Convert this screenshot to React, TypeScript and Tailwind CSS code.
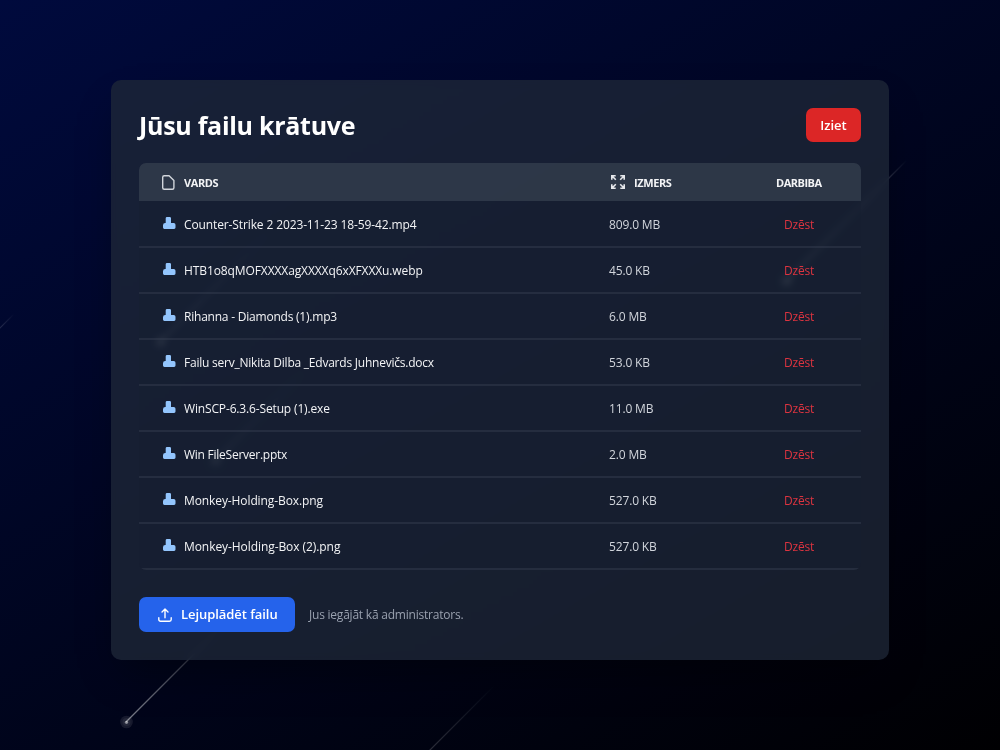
import React from "react";

type FileRow = { name: string; size: string; tracking: string };

const files: FileRow[] = [
  { name: "Counter-Strike 2 2023-11-23 18-59-42.mp4", size: "809.0 MB", tracking: "tracking-[-0.12px]" },
  { name: "HTB1o8qMOFXXXXagXXXXq6xXFXXXu.webp", size: "45.0 KB", tracking: "tracking-[-0.1px]" },
  { name: "Rihanna - Diamonds (1).mp3", size: "6.0 MB", tracking: "tracking-[-0.22px]" },
  { name: "Failu serv_Nikita Dilba _Edvards Juhnevičs.docx", size: "53.0 KB", tracking: "tracking-[-0.23px]" },
  { name: "WinSCP-6.3.6-Setup (1).exe", size: "11.0 MB", tracking: "tracking-[-0.15px]" },
  { name: "Win FileServer.pptx", size: "2.0 MB", tracking: "tracking-[-0.25px]" },
  { name: "Monkey-Holding-Box.png", size: "527.0 KB", tracking: "tracking-[-0.1px]" },
  { name: "Monkey-Holding-Box (2).png", size: "527.0 KB", tracking: "tracking-[-0.07px]" },
];

const trails = [
  { x: 126, y: 722, len: 112, o: 0.48, dot: true },
  { x: 425, y: 755, len: 70, o: 0.18, dot: false },
  { x: -10, y: 338, len: 24, o: 0.25, dot: false },
  { x: 786, y: 281, len: 121, o: 1, dot: true },
  { x: 160, y: 342, len: 110, o: 0.9, dot: true },
  { x: 215, y: 461, len: 90, o: 0.7, dot: true },
];

function Meteors() {
  return (
    <svg className="absolute inset-0" width="1000" height="750" viewBox="0 0 1000 750" aria-hidden="true">
      <defs>
        {trails.map((t, i) => (
          <linearGradient key={i} id={`trail${i}`} gradientUnits="userSpaceOnUse" x1={t.x} y1={t.y} x2={t.x + t.len} y2={t.y - t.len}>
            <stop offset="0" stopColor="#fff" stopOpacity={t.o} />
            <stop offset="1" stopColor="#fff" stopOpacity="0" />
          </linearGradient>
        ))}
      </defs>
      {trails.map((t, i) => (
        <g key={i}>
          <path d={`M${t.x} ${t.y}l${t.len} ${-t.len}`} stroke={`url(#trail${i})`} strokeWidth="1.2" />
          {t.dot && <circle cx={t.x + 0.5} cy={t.y} r="6.3" fill="#fff" fillOpacity={t.o * 0.18} />}
          {t.dot && <circle cx={t.x + 0.5} cy={t.y} r="4" fill="#fff" fillOpacity={t.o * 0.12} />}
          {t.dot && <circle cx={t.x + 0.5} cy={t.y + 0.3} r="1.6" fill="#fff" fillOpacity={t.o} />}
        </g>
      ))}
    </svg>
  );
}

function FileIcon() {
  return (
    <svg className="ml-[21px] h-[17px] w-[17px]" viewBox="0 0 17 17" fill="none" stroke="#d1d5db" strokeWidth="1.4" strokeLinejoin="round">
      <path d="M4.2 1.7h4.9L13.9 6.5v7.2a1.5 1.5 0 0 1-1.5 1.5H4.2a1.5 1.5 0 0 1-1.5-1.5V3.2a1.5 1.5 0 0 1 1.5-1.5z" />
    </svg>
  );
}

function ExpandIcon() {
  return (
    <svg className="h-[14px] w-[14px]" viewBox="0 0 14 14" fill="none" stroke="#e5e7eb" strokeWidth="1.6">
      <path d="M.8 4.7V.8h3.900M.8.8l4 4M9.300.8h3.900v3.900M13.200.8l-4 4M.8 9.300v3.900h3.900M.8 13.200l4-4M9.300 13.200h3.900V9.300M13.200 13.200l-4-4" />
    </svg>
  );
}

function ItemIcon() {
  return (
    <svg className="ml-[24px] h-[12px] w-[13px] -translate-y-[2px]" viewBox="0 0 13 12" fill="#93c5fd">
      <path d="M4 0h2.700A1.300 1.300 0 0 1 8 1.300V6h2.700a1.800 1.800 0 0 1 1.800 1.800v2.800A1.400 1.400 0 0 1 11.100 12H1.400A1.400 1.400 0 0 1 0 10.600V8.200A2.200 2.200 0 0 1 2.200 6h.5V1.300A1.300 1.300 0 0 1 4 0z" />
    </svg>
  );
}

function UploadIcon() {
  return (
    <svg className="h-[14px] w-[14px]" viewBox="0 0 14 14" fill="none" stroke="#fff" strokeWidth="1.4" strokeLinecap="round" strokeLinejoin="round">
      <path d="M.8 9.700v1.800a1.700 1.700 0 0 0 1.700 1.700h9a1.700 1.700 0 0 0 1.700-1.700V9.700M7 9.700V1M4 4l3-3 3 3" />
    </svg>
  );
}

export default function App() {
  return (
    <div className="relative flex h-[750px] w-[1000px] justify-center overflow-hidden bg-[linear-gradient(150deg,#000a3d_0%,#000002_100%)] pt-[80px] font-['Open_Sans','Noto_Sans',sans-serif]">
      <Meteors />
      <main className="relative flex h-[579.5px] w-[778px] flex-col rounded-[10px] bg-[#1f2838]/75 p-[28px] shadow-[0_20px_40px_-12px_rgba(0,0,0,0.4)] backdrop-blur-[3.5px]">
        <header className="flex h-[34px] shrink-0 items-center justify-between">
          <h1 className="pt-[2px] text-[25px] font-bold tracking-[-0.28px] whitespace-nowrap text-white">Jūsu failu krātuve</h1>
          <button className="h-[34px] w-[55px] rounded-[7px] bg-[#dc2626] pt-[2px] text-[13px] font-semibold text-white">Iziet</button>
        </header>
        <section className="mt-[21px] flex shrink-0 flex-col overflow-hidden rounded-[7px] bg-[#171d30]/40">
          <div className="mb-px flex h-[38px] items-center bg-[#374151]/70 text-[11px] font-bold text-gray-100">
            <div className="flex w-[472px] items-center">
              <FileIcon />
              <span className="ml-[7px] pt-[2px] tracking-[-0.4px]">VARDS</span>
            </div>
            <div className="flex w-[165px] items-center">
              <ExpandIcon />
              <span className="ml-[9px] pt-[2px] tracking-[-0.4px]">IZMERS</span>
            </div>
            <span className="pt-[2px] tracking-[-0.5px]">DARBIBA</span>
          </div>
          {files.map((f) => (
            <div key={f.name} className="flex h-[46px] items-center border-b-2 border-[#374151]/45 pt-px text-[12px] whitespace-nowrap">
              <div className="flex w-[470px] items-center">
                <ItemIcon />
                <span className={`ml-[8px] text-gray-100 ${f.tracking}`}>{f.name}</span>
              </div>
              <span className="w-[175px] tracking-[-0.15px] text-gray-300">{f.size}</span>
              <span className="tracking-[-0.22px] text-[#dc3440]">Dzēst</span>
            </div>
          ))}
        </section>
        <footer className="mt-[27px] flex shrink-0 items-center gap-[14px]">
          <button className="flex h-[35px] w-[156px] items-center rounded-[7px] bg-[#2563eb] pl-[19px] text-[13px] font-semibold whitespace-nowrap text-white">
            <UploadIcon />
            <span className="ml-[9px] pt-px tracking-[-0.06px]">Lejuplādēt failu</span>
          </button>
          <span className="pt-px text-[12px] tracking-[-0.22px] text-gray-400">Jus iegājāt kā administrators.</span>
        </footer>
      </main>
    </div>
  );
}
